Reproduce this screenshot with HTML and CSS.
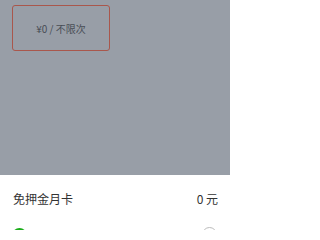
FILE: index.html
```html
<!DOCTYPE html>
<html>
<head>
<meta charset="utf-8">
<meta name="viewport" content="width=230">
<link rel="stylesheet" href="styles.css">
</head>
<body>
<div class="overlay">
  <div class="card">¥0 / 不限次</div>
</div>
<div class="sheet">
  <div class="row">
    <span class="title">免押金月卡</span>
    <span class="price">0 元</span>
  </div>
  <div class="pay">
    <span class="icon"></span>
    <span class="label">微信支付</span>
    <span class="radio"></span>
  </div>
</div>
</body>
</html>
```

FILE: styles.css
```css
html, body {
  margin: 0;
  padding: 0;
  height: 230px;
  overflow: hidden;
  font-family: "Noto Sans CJK SC", "Noto Sans", sans-serif;
}
body {
  width: 230px;
}
.overlay {
  height: 175px;
  background: #989ea7;
  padding: 5px 0 0 12px;
  box-sizing: border-box;
}
.card {
  width: 98px;
  height: 46px;
  box-sizing: border-box;
  border: 1.5px solid #a9574c;
  border-radius: 3px;
  display: flex;
  align-items: center;
  justify-content: center;
  font-size: 10px;
  color: #484d55;
}
.sheet {
  background: #fff;
  height: 55px;
  padding: 0 12px 0 13px;
}
.row {
  height: 46px;
  display: flex;
  align-items: center;
  justify-content: space-between;
  font-size: 12px;
  color: #333;
  padding-top: 1px;
  box-sizing: border-box;
}
.pay {
  display: flex;
  align-items: flex-start;
  padding-top: 7px;
}
.icon {
  width: 15px;
  height: 15px;
  border-radius: 50%;
  background: #1aad19;
  margin-left: -1px;
}
.label {
  margin-left: 14px;
  font-size: 11px;
  color: #999;
  line-height: 15px;
  flex: 1;
}
.radio {
  width: 13px;
  height: 13px;
  border: 1px solid #bbb;
  border-radius: 50%;
  margin-right: 1px;
  margin-top: -1px;
}
```
